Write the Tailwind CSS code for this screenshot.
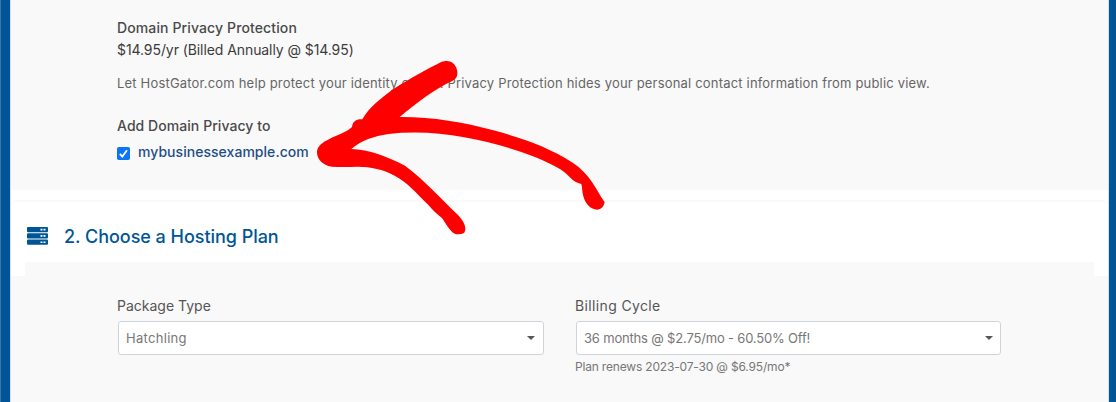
<!DOCTYPE html>
<html lang="en">
<head>
<meta charset="utf-8">
<title>Choose a Hosting Plan</title>
<script src="https://cdn.jsdelivr.net/npm/@tailwindcss/browser@4"></script>
</head>
<body class="h-[402px] w-[1116px] overflow-hidden bg-[#005596] font-[Inter,sans-serif] text-[#4a4a4a]">
<div class="relative flex h-full border-l border-[#3b76ad] pl-[9px] pr-[7px]">
  <main class="flex h-full w-full flex-col border-x border-[#d5dfe8] bg-white whitespace-nowrap">
    <section class="flex h-[190px] shrink-0 flex-col items-start bg-[#f9f9f9] pl-[106px] pt-[17px]">
      <h2 class="h-[22px] text-[14px] leading-[22px] font-medium tracking-[0.12px]">Domain Privacy Protection</h2>
      <p class="h-[22px] text-[14px] leading-[22px] text-[#3c3c3c] tracking-[-0.08px]">$14.95/yr (Billed Annually @ $14.95)</p>
      <p class="mt-[11px] h-[22px] text-[13px] leading-[22px] tracking-[0.185px] text-[#666]">Let HostGator.com help protect your identity online. Privacy Protection hides your personal contact information from public view.</p>
      <h3 class="mt-[21px] h-[22px] text-[14px] leading-[22px] font-medium tracking-[0.06px]">Add Domain Privacy to</h3>
      <label class="mt-[4px] flex h-[22px] items-center text-[14px] leading-[22px] font-medium tracking-[0.04px] text-[#1f4e85]">
        <svg class="mt-[3px] mr-[8px] h-[13px] w-[13px]" viewBox="0 0 13 13"><rect width="13" height="13" rx="1.8" fill="#0b75f5"/><path d="M2.9 6.8 5.3 9.5 10 3.2" fill="none" stroke="#fff" stroke-width="1.8"/></svg>
        <span>mybusinessexample.com</span>
      </label>
    </section>
    <section class="mt-[10px] flex flex-1 flex-col">
      <header class="flex h-[62px] shrink-0 items-start rounded-t-md border-t-2 border-[#f9f9f9] pl-[16px] pt-[21px] text-[#005596]">
        <svg class="mt-[4px] h-[18px] w-[21px]" viewBox="0 0 21 18" fill="#005596"><rect width="21" height="5.2" rx="1"/><rect y="6.3" width="21" height="5.2" rx="1"/><rect y="12.6" width="21" height="5.2" rx="1"/><g fill="#fff"><path d="M13.5 1.8h2v1.6h-2zM16.5 1.8h2v1.6h-2zM13.5 8.1h2v1.6h-2zM16.5 8.1h2v1.6h-2zM13.5 14.4h2V16h-2zM16.5 14.4h2V16h-2z"/></g></svg>
        <h2 class="ml-[16px] text-[18px] leading-[28px] font-medium tracking-[-0.04px]">2. Choose a Hosting Plan</h2>
      </header>
      <div class="mx-[14px] h-[14px] shrink-0 bg-[#f9f9f9]"></div>
      <div class="flex flex-1 gap-[31px] bg-[#f9f9f9] pl-[106px] pt-[19px]">
        <div class="w-[427px]">
          <div class="h-[22px] text-[14px] leading-[22px] text-[#555]"><span>Package Type</span></div>
          <div class="mt-[4px] ml-px flex h-[34px] items-center justify-between rounded-[3px] border border-[#ced4da] bg-white pr-[8px] pl-[7px] text-[13px] text-[#777]"><span class="pt-[2px] tracking-[0.3px]">Hatchling</span><svg class="h-[4px] w-[8px]" viewBox="0 0 8 4"><path d="M0 0h8L4 4z" fill="#555"/></svg></div>
        </div>
        <div class="w-[426px]">
          <div class="h-[22px] text-[14px] leading-[22px] tracking-[0.36px] text-[#555]"><span>Billing Cycle</span></div>
          <div class="mt-[4px] ml-px flex h-[34px] items-center justify-between rounded-[3px] border border-[#ced4da] bg-white pr-[7px] pl-[7px] text-[13px] text-[#777]"><span class="pt-[2px] tracking-[-0.18px]">36 months @ $2.75/mo - 60.50% Off!</span><svg class="h-[4px] w-[8px]" viewBox="0 0 8 4"><path d="M0 0h8L4 4z" fill="#555"/></svg></div>
          <p class="mt-[3px] text-[12px] leading-[18px] tracking-[-0.18px] text-[#777]">Plan renews 2023-07-30 @ $6.95/mo*</p>
        </div>
      </div>
    </section>
  </main>
  <svg class="pointer-events-none absolute top-[50px] left-[299px] h-[200px] w-[330px]" viewBox="0 0 990 600" fill="#f00"><path d="M436 33C456 31 470 45 472 66C473 78 470 86 458 92C400 119 350 158 299 201C392 200 489 216 580 241C668 265 745 291 818 338C869 371 887 416 914 457C911 471 904 478 892 479C871 479 855 460 850 439C846 425 847 413 844 402C817 398 805 372 781 358C701 311 594 281 493 262C418 248 341 243 265 252C222 259 184 271 154 297C207 299 260 319 315 347C372 389 423 446 471 492C493 513 501 535 493 548C482 553 469 555 460 549C444 535 435 515 425 503C411 494 398 480 386 466C348 428 323 398 284 377C248 357 213 351 173 350C143 351 119 351 95 350C67 345 50 327 51 304C54 283 75 274 98 262C123 251 145 242 156 231C158 215 168 207 187 208C207 172 242 146 279 118C329 85 386 55 425 35Z"/></svg>
</div>
</body>
</html>
